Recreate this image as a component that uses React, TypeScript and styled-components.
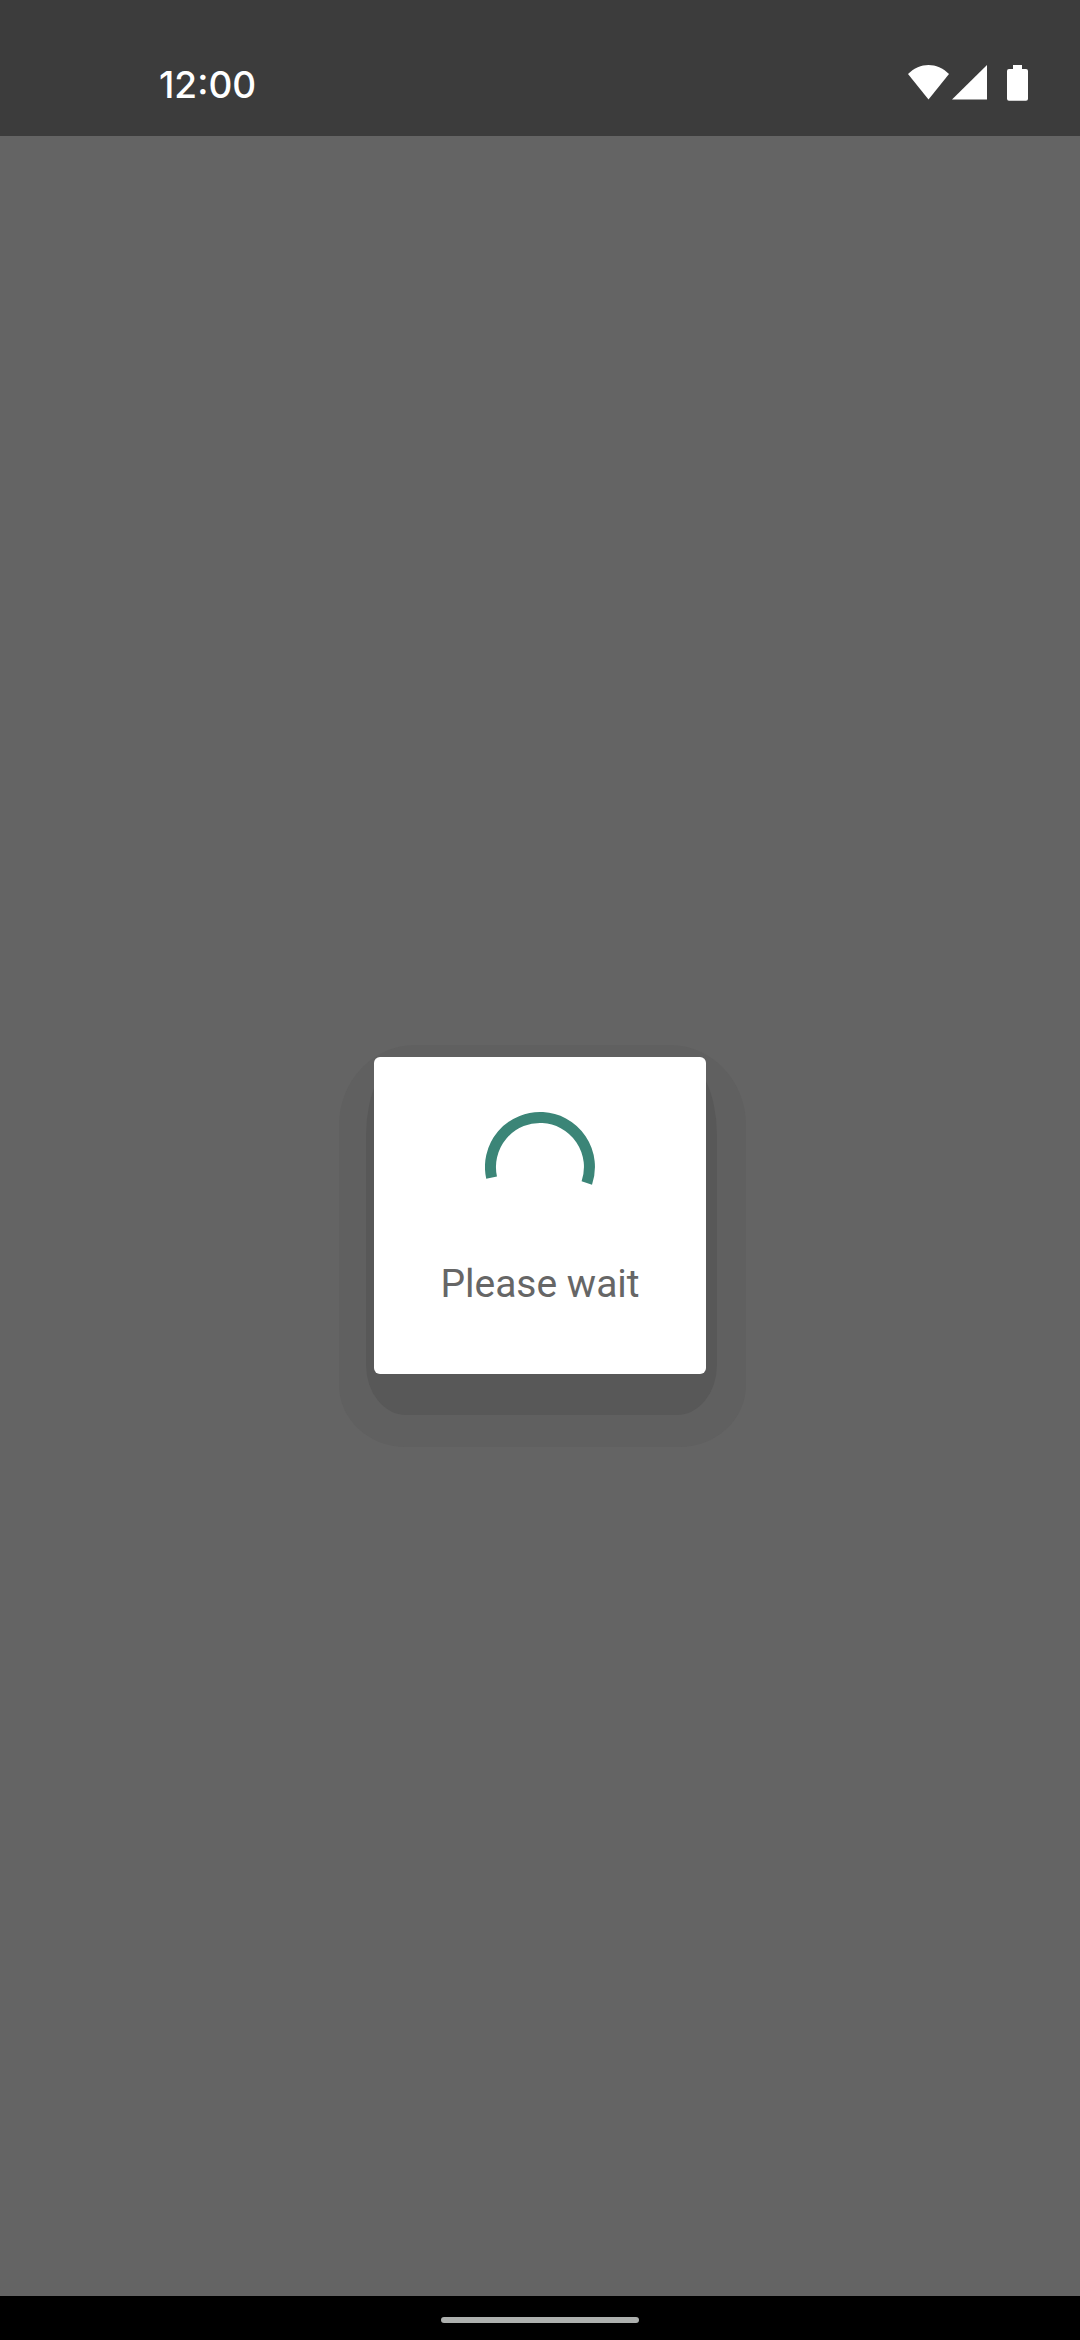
import React from "react";
import styled, { createGlobalStyle } from "styled-components";

const GlobalStyle = createGlobalStyle`
  * { box-sizing: border-box; }
  body { margin: 0; background: #646464; }
`;

const Screen = styled.div`
  display: flex;
  flex-direction: column;
  min-height: 100vh;
  background: #646464;
`;

const StatusBar = styled.header`
  display: flex;
  align-items: flex-end;
  justify-content: space-between;
  height: 136px;
  padding: 0 52px 29px 159px;
  background: #3c3c3c;
`;

const Clock = styled.time`
  color: #fff;
  font: 500 37px/44px Inter, sans-serif;
`;

const StatusIcons = styled.div`
  display: flex;
  align-items: flex-end;
  padding-bottom: 6px;
`;

const StatusIcon = styled.svg<{ $gap?: number }>`
  display: block;
  margin-left: ${(p) => p.$gap ?? 0}px;
  fill: #fff;
`;

const Scrim = styled.main`
  display: flex;
  flex: 1;
  align-items: center;
  justify-content: center;
  padding-bottom: 2px;
`;

const Dialog = styled.div`
  position: relative;
  z-index: 0;
  display: flex;
  flex-direction: column;
  align-items: center;

  &::before,
  &::after {
    content: "";
    position: absolute;
    z-index: -1;
  }
  &::before {
    inset: -12px -40px -73px -35px;
    border-radius: 76px 76px 66px 66px / 80px 80px 62px 62px;
    background: #606060;
  }
  &::after {
    inset: 0 -11px -41px -8px;
    border-radius: 40px / 78px 78px 50px 50px;
    background: #585858;
  }
`;

const Card = styled.div`
  display: flex;
  flex-direction: column;
  align-items: center;
  gap: 41px;
  padding: 55px 66px 69px;
  border-radius: 6px;
  background: #fff;
`;

const Spinner = styled.svg`
  display: block;
`;

const Message = styled.p`
  margin: 0;
  color: #666;
  font: 400 39px/42px Roboto, sans-serif;
  white-space: nowrap;
`;

const NavigationBar = styled.footer`
  display: flex;
  align-items: center;
  justify-content: center;
  height: 44px;
  padding-top: 4px;
  background: #000;
`;

const HomeHandle = styled.div`
  width: 198px;
  height: 6px;
  border-radius: 3px;
  background: #adb0ae;
`;

export default function App() {
  return (
    <>
      <GlobalStyle />
      <Screen>
        <StatusBar>
          <Clock>12:00</Clock>
          <StatusIcons>
            <StatusIcon width="41" height="36" viewBox="0 0 41 36" aria-hidden="true">
              <path d="M0 9C12-3 29-3 41 9L20.5 34.5Z" />
            </StatusIcon>
            <StatusIcon $gap={3} width="35" height="36" viewBox="0 0 35 36" aria-hidden="true">
              <path d="M35 0V34.5H0Z" />
            </StatusIcon>
            <StatusIcon $gap={20} width="21" height="36" viewBox="0 0 21 36" aria-hidden="true">
              <path d="M6 0H15V4H19Q21 4 21 6V33.7Q21 35.7 19 35.7H2Q0 35.7 0 33.7V6Q0 4 2 4H6Z" />
            </StatusIcon>
          </StatusIcons>
        </StatusBar>
        <Scrim>
          <Dialog role="dialog" aria-modal="true">
            <Card>
              <Spinner width="110" height="110" viewBox="0 0 110 110" aria-hidden="true">
                <path
                  d="M6.6 65.6A49.5 49.5 0 1 1 101.8 71"
                  fill="none"
                  stroke="#3b8577"
                  strokeWidth="11"
                />
              </Spinner>
              <Message>Please wait</Message>
            </Card>
          </Dialog>
        </Scrim>
        <NavigationBar>
          <HomeHandle />
        </NavigationBar>
      </Screen>
    </>
  );
}
